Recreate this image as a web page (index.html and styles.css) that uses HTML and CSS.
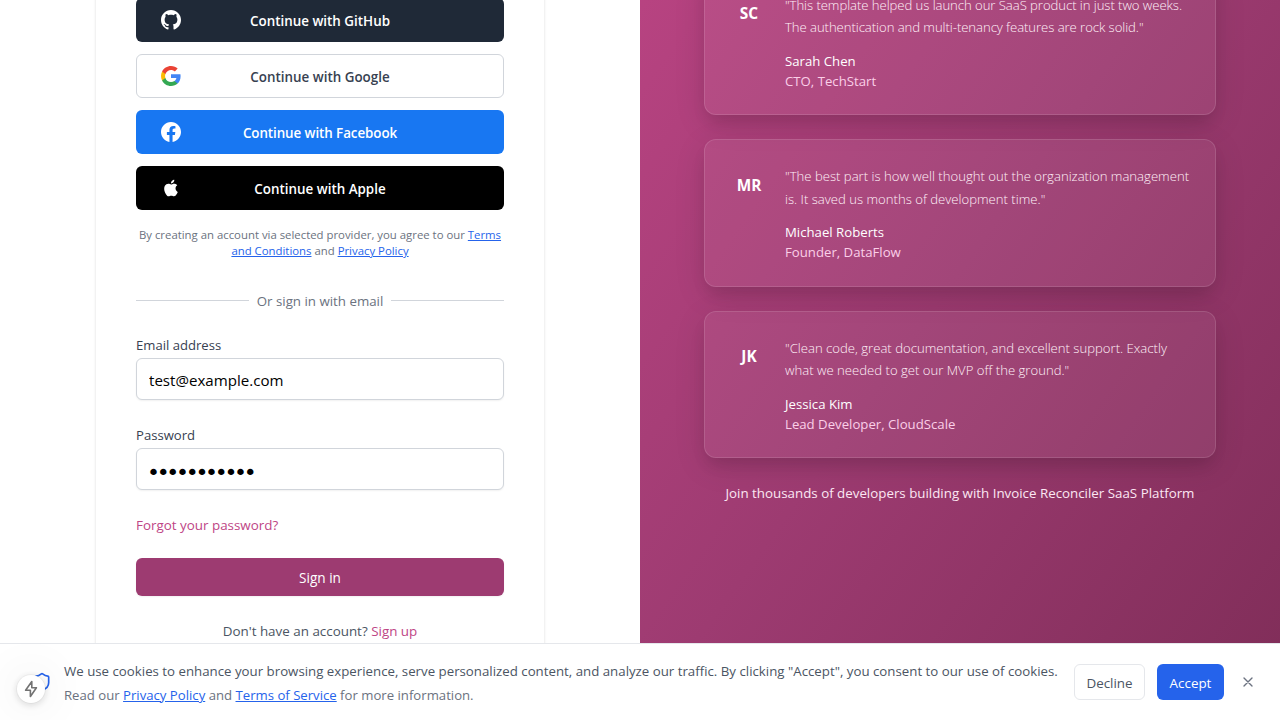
FILE: index.html
```html
<!DOCTYPE html>
<html lang="en">
<head>
<meta charset="utf-8">
<title>Sign in</title>
<link rel="stylesheet" href="styles.css">
</head>
<body>
<main class="page">
  <section class="auth">
    <div class="auth-card">
      <div class="providers">
        <button class="provider github">
          <svg class="provider-icon" viewBox="0 0 24 24" fill="currentColor"><path d="M12 0c-6.626 0-12 5.373-12 12 0 5.302 3.438 9.8 8.207 11.387.599.111.793-.261.793-.577v-2.234c-3.338.726-4.033-1.416-4.033-1.416-.546-1.387-1.333-1.756-1.333-1.756-1.089-.745.083-.729.083-.729 1.205.084 1.839 1.237 1.839 1.237 1.07 1.834 2.807 1.304 3.492.997.107-.775.418-1.305.762-1.604-2.665-.305-5.467-1.334-5.467-5.931 0-1.311.469-2.381 1.236-3.221-.124-.303-.535-1.524.117-3.176 0 0 1.008-.322 3.301 1.23.957-.266 1.983-.399 3.003-.404 1.02.005 2.047.138 3.006.404 2.291-1.552 3.297-1.23 3.297-1.23.653 1.653.242 2.874.118 3.176.77.84 1.235 1.911 1.235 3.221 0 4.609-2.807 5.624-5.479 5.921.43.372.823 1.102.823 2.222v3.293c0 .319.192.694.801.576 4.765-1.589 8.199-6.086 8.199-11.386 0-6.627-5.373-12-12-12z"/></svg>
          <span>Continue with GitHub</span>
        </button>
        <button class="provider google">
          <svg class="provider-icon" viewBox="0 0 24 24"><path fill="#4285F4" d="M23.49 12.27c0-.79-.07-1.54-.19-2.27H12v4.51h6.47c-.29 1.48-1.14 2.73-2.4 3.58v3h3.86c2.26-2.09 3.56-5.17 3.56-8.82z"/><path fill="#34A853" d="M12 24c3.24 0 5.95-1.08 7.93-2.91l-3.86-3c-1.08.72-2.45 1.16-4.07 1.16-3.13 0-5.78-2.11-6.73-4.96H1.29v3.09C3.26 21.3 7.31 24 12 24z"/><path fill="#FBBC05" d="M5.27 14.29c-.25-.72-.38-1.49-.38-2.29s.14-1.57.38-2.29V6.62H1.29C.47 8.24 0 10.06 0 12s.47 3.76 1.29 5.38l3.98-3.09z"/><path fill="#EA4335" d="M12 4.75c1.77 0 3.35.61 4.6 1.8l3.42-3.42C17.95 1.19 15.24 0 12 0 7.31 0 3.26 2.7 1.29 6.62l3.98 3.09C6.22 6.86 8.87 4.75 12 4.75z"/></svg>
          <span>Continue with Google</span>
        </button>
        <button class="provider facebook">
          <svg class="provider-icon" viewBox="0 0 24 24" fill="currentColor"><path d="M24 12.073c0-6.627-5.373-12-12-12s-12 5.373-12 12c0 5.99 4.388 10.954 10.125 11.854v-8.385H7.078v-3.47h3.047V9.43c0-3.007 1.792-4.669 4.533-4.669 1.312 0 2.686.235 2.686.235v2.953H15.83c-1.491 0-1.956.925-1.956 1.874v2.25h3.328l-.532 3.47h-2.796v8.385C19.612 23.027 24 18.062 24 12.073z"/></svg>
          <span>Continue with Facebook</span>
        </button>
        <button class="provider apple">
          <svg class="provider-icon" viewBox="0 0 24 24" fill="currentColor"><path d="M18.71 19.5c-.83 1.24-1.71 2.45-3.05 2.47-1.34.03-1.77-.79-3.29-.79-1.53 0-2 .77-3.27.82-1.31.05-2.3-1.32-3.14-2.53C4.25 17 2.94 12.45 4.7 9.39c.87-1.52 2.43-2.48 4.12-2.51 1.28-.02 2.5.87 3.29.87.78 0 2.26-1.07 3.81-.91.65.03 2.47.26 3.64 1.98-.09.06-2.17 1.28-2.15 3.81.03 3.02 2.65 4.03 2.68 4.04-.03.07-.42 1.44-1.38 2.83M13 3.5c.73-.83 1.94-1.46 2.94-1.5.13 1.17-.34 2.35-1.04 3.19-.69.85-1.83 1.51-2.95 1.42-.15-1.15.41-2.35 1.05-3.11z"/></svg>
          <span>Continue with Apple</span>
        </button>
      </div>
      <p class="terms">By creating an account via selected provider, you agree to our <a href="#">Terms<br>and Conditions</a> and <a href="#">Privacy Policy</a></p>
      <div class="divider"><span>Or sign in with email</span></div>
      <label class="label" for="email">Email address</label>
      <input class="input" id="email" type="email" value="test@example.com">
      <label class="label label-next" for="password">Password</label>
      <input class="input input-password" id="password" type="password" value="12345678901">
      <a class="forgot" href="#">Forgot your password?</a>
      <button class="submit">Sign in</button>
      <p class="signup">Don't have an account? <a href="#">Sign up</a></p>
    </div>
  </section>
  <section class="showcase">
    <div class="testimonials">
      <article class="testimonial">
        <div class="avatar">SC</div>
        <div class="testimonial-body">
          <p class="quote quote-tight">"This template helped us launch our SaaS product in just two weeks.<br>The authentication and multi-tenancy features are rock solid."</p>
          <p class="name">Sarah Chen</p>
          <p class="role">CTO, TechStart</p>
        </div>
      </article>
      <article class="testimonial">
        <div class="avatar">MR</div>
        <div class="testimonial-body">
          <p class="quote">"The best part is how well thought out the organization management<br>is. It saved us months of development time."</p>
          <p class="name">Michael Roberts</p>
          <p class="role">Founder, DataFlow</p>
        </div>
      </article>
      <article class="testimonial">
        <div class="avatar">JK</div>
        <div class="testimonial-body">
          <p class="quote">"Clean code, great documentation, and excellent support. Exactly<br>what we needed to get our MVP off the ground."</p>
          <p class="name">Jessica Kim</p>
          <p class="role">Lead Developer, CloudScale</p>
        </div>
      </article>
    </div>
    <p class="join">Join thousands of developers building with Invoice Reconciler SaaS Platform</p>
  </section>
</main>
<aside class="cookies">
  <svg class="shield" viewBox="0 0 24 24"><path d="M20 13c0 5-3.5 7.5-7.66 8.95a1 1 0 0 1-.67-.01C7.5 20.5 4 18 4 13V6a1 1 0 0 1 1-1c2 0 4.5-1.2 6.24-2.72a1.17 1.17 0 0 1 1.52 0C14.51 3.81 17 5 19 5a1 1 0 0 1 1 1z"/></svg>
  <div class="cookie-text">
    <p class="cookie-main">We use cookies to enhance your browsing experience, serve personalized content, and analyze our traffic. By clicking "Accept", you consent to our use of cookies.</p>
    <p class="cookie-more">Read our <a href="#">Privacy Policy</a> and <a href="#">Terms of Service</a> for more information.</p>
  </div>
  <div class="cookie-actions">
    <button class="decline">Decline</button>
    <button class="accept">Accept</button>
    <button class="close" aria-label="Close"><svg viewBox="0 0 24 24"><path d="M18 6 6 18M6 6l12 12"/></svg></button>
  </div>
</aside>
<div class="indicator"><svg viewBox="0 0 28 28"><path d="M14.8 6.5 8.6 15.3h4.8v6.2l6-8.8h-4.6z"/></svg></div>
</body>
</html>
```
FILE: styles.css
```css
* { box-sizing: border-box; margin: 0; padding: 0; }
body {
  height: 720px;
  overflow: hidden;
  background: #fff;
  color: #374151;
  font: 400 13.4px/20px "Segoe UI", "Open Sans", "Noto Sans", sans-serif;
}
button, input { font: inherit; border: 0; }
p, label, button, span { white-space: nowrap; }
.page { display: grid; grid-template-columns: minmax(0, 1fr) minmax(0, 1fr); height: 720px; overflow: hidden; }

.auth { display: flex; justify-content: center; align-items: flex-start; }
.auth-card {
  width: 448px;
  height: 740px;
  margin-top: -10px;
  padding: 8px 40px 0;
  background: #fff;
  box-shadow: 0 1px 3px rgba(0, 0, 0, .1), 0 1px 2px rgba(0, 0, 0, .06);
}
.providers { display: flex; flex-direction: column; gap: 12px; }
.provider {
  display: grid;
  grid-template-columns: 20px 1fr 20px;
  align-items: center;
  height: 44px;
  padding: 0 24px;
  border: 1px solid transparent;
  border-radius: 6px;
  font-weight: 600;
  color: #fff;
}
.provider-icon { width: 20px; height: 20px; display: block; }
.provider span { padding-top: 1px; }
.github { background: #1f2937; }
.google { background: #fff; border-color: #d1d5db; color: #374151; }
.facebook { background: #1877f2; letter-spacing: -.08px; }
.apple { background: #000; }

.terms { margin-top: 17px; font-size: 11.36px; line-height: 16px; text-align: center; color: #6b7280; }
.terms a, .cookie-more a { color: #2563eb; text-decoration: underline; }
.divider { display: flex; align-items: center; gap: 8px; height: 20px; margin: 32px 0 24px; font-size: 13.3px; color: #6b7280; }
.divider::before, .divider::after { content: ""; flex: 1; height: 1px; margin-bottom: 2px; background: #d1d5db; }
.label { display: block; height: 20px; font-size: 13.1px; color: #374151; margin-bottom: 3px; }
.label-next { margin-top: 25px; }
.input {
  display: block;
  width: 100%;
  height: 42px;
  padding: 1px 12px 0;
  border: 1px solid #d1d5db;
  border-radius: 6px;
  background: #fff;
  color: #000;
  font-size: 15.1px;
  box-shadow: 0 1px 2px rgba(0, 0, 0, .06);
}
.input-password { padding: 6px 10px 0; font-family: "DejaVu Sans", sans-serif; font-size: 22px; letter-spacing: -3.3px; }
.forgot { display: block; margin-top: 25px; color: #be4585; text-decoration: none; }
.submit {
  display: block;
  width: 100%;
  height: 38px;
  margin-top: 23px;
  padding-top: 2px;
  border-radius: 6px;
  background: #9d3b71;
  color: #fff;
  font-size: 13.6px;
  box-shadow: 0 1px 2px rgba(0, 0, 0, .06);
}
.signup { margin-top: 25px; text-align: center; color: #4b5563; }
.signup a { color: #be4585; text-decoration: none; }

.showcase {
  height: 900px;
  margin-top: -180px;
  padding: 147.5px 64px 0;
  background: linear-gradient(to bottom right, #be4585, #9d3b71 50%, #7f2d58);
}
.testimonials { display: flex; flex-direction: column; gap: 24px; }
.testimonial {
  display: flex;
  gap: 16px;
  height: 147.5px;
  padding: 24px;
  border: 1px solid rgba(255, 255, 255, .12);
  border-radius: 12px;
  background: rgba(255, 255, 255, .06);
  box-shadow: 0 8px 32px rgba(0, 0, 0, .1), 0 10px 15px -3px rgba(0, 0, 0, .1);
}
.testimonial-body { padding-top: 1px; }
.avatar { width: 40px; height: 43px; display: grid; place-items: center; color: #fff; font-size: 15.4px; font-weight: 700; }
.quote { font-size: 13.13px; font-weight: 300; line-height: 22.75px; color: #fff0f8; }
.quote-tight { letter-spacing: -.06px; }
.name { margin-top: 11.7px; color: #fff; font-size: 13.2px; font-weight: 500; }
.role { color: #fbcfe8; font-size: 13.2px; }
.join { margin-top: 25px; text-align: center; color: #fce7f3; font-size: 13.34px; }

.cookies {
  position: fixed;
  left: 0; right: 0; bottom: 0;
  height: 77px;
  display: flex;
  align-items: center;
  padding: 0 16px 0 32px;
  border-top: 1px solid #e5e7eb;
  background: #fff;
}
.shield { width: 20px; height: 20px; margin-right: 12px; fill: none; stroke: #2563eb; stroke-width: 2; }
.cookie-text { flex: 1; min-width: 0; line-height: 24px; padding-top: 2px; }
.cookie-main { color: #4b5563; font-size: 13.28px; }
.cookie-more { color: #6b7280; font-size: 13.16px; }
.cookie-actions { display: flex; align-items: center; gap: 12px; }
.decline, .accept { height: 36px; border-radius: 6px; padding-top: 2px; }
.decline { width: 71px; border: 1px solid #e5e7eb; background: #fff; color: #4b5563; }
.accept { width: 67px; background: #2563eb; color: #fff; }
.close { width: 28px; height: 28px; margin-left: -2px; margin-right: 2px; display: grid; place-items: center; background: none; }
.close svg { width: 16px; height: 16px; fill: none; stroke: #6b7280; stroke-width: 2; stroke-linecap: round; }
.indicator {
  position: fixed;
  left: 17px; bottom: 17px;
  width: 28px; height: 28px;
  border-radius: 50%;
  background: #fff;
  box-shadow: 0 0 0 1px rgba(0, 0, 0, .04), 0 2px 8px rgba(0, 0, 0, .15), 0 0 48px rgba(0, 0, 0, .12);
}
.indicator svg { display: block; width: 28px; height: 28px; fill: none; stroke: #737373; stroke-width: 1.6; stroke-linejoin: round; }
```
